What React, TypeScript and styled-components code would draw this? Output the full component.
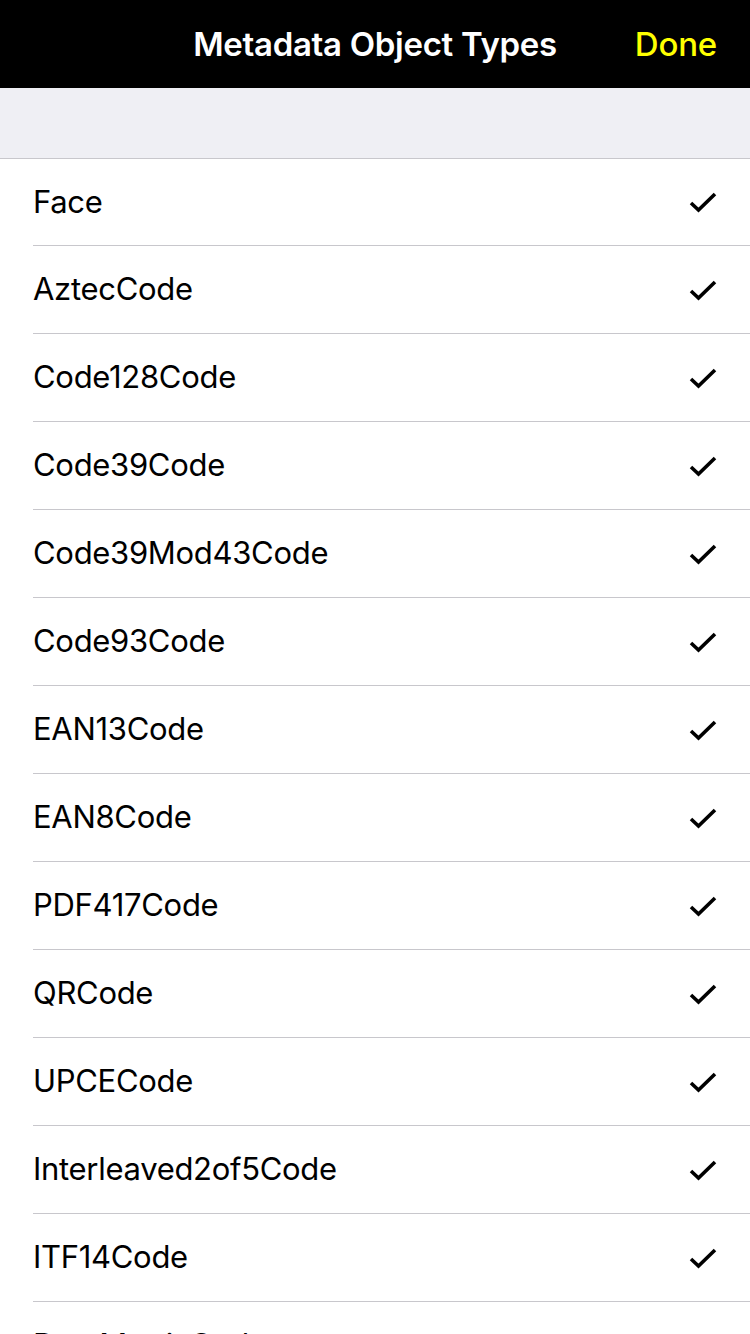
import React from "react";
import styled, { createGlobalStyle } from "styled-components";

const Global = createGlobalStyle`
  html, body { margin: 0; padding: 0; background: #ffffff; }
  body { font-family: Inter, "Noto Sans", sans-serif; -webkit-font-smoothing: antialiased; }
  #root { width: 750px; height: 1334px; overflow: hidden; }
`;

const Page = styled.div`
  width: 750px;
  height: 1334px;
  overflow: hidden;
  display: flex;
  flex-direction: column;
  background: #ffffff;
`;

const NavBar = styled.header`
  position: relative;
  height: 88px;
  flex: none;
  background: #000000;
  display: flex;
  align-items: center;
  justify-content: center;
`;

const Title = styled.h1`
  margin: 0;
  color: #ffffff;
  font-size: 33px;
  font-weight: 600;
  letter-spacing: -0.3px;
`;

const DoneButton = styled.button`
  position: absolute;
  right: 33px;
  top: 0;
  height: 88px;
  padding: 0;
  border: 0;
  background: transparent;
  color: #ffff00;
  font-family: inherit;
  font-size: 33px;
  font-weight: 500;
  letter-spacing: -0.2px;
`;

const SectionGap = styled.div`
  height: 70px;
  flex: none;
  background: #efeff4;
  border-bottom: 1px solid #c8c7cc;
`;

const List = styled.ul`
  margin: 0;
  padding: 0;
  list-style: none;
`;

const Row = styled.li`
  height: 88px;
  padding-left: 33px;
  display: flex;
  align-items: center;

  &:first-child {
    height: 87px;
  }
`;

const RowInner = styled.div`
  flex: 1;
  height: 100%;
  display: flex;
  align-items: center;
  justify-content: space-between;
  padding-right: 33px;
  border-bottom: 1px solid #c8c7cc;
  box-sizing: border-box;
`;

const Label = styled.span`
  color: #000000;
  font-size: 31px;
  font-weight: 400;
  letter-spacing: -0.3px;
  padding-bottom: 2px;
`;

const Check = () => (
  <svg width="28" height="22" viewBox="0 0 28 22" aria-hidden="true">
    <path d="M2 12 L9.5 19 L26 3" fill="none" stroke="#000" strokeWidth="3.6" strokeLinecap="butt" strokeLinejoin="miter" />
  </svg>
);

const items = [
  "Face",
  "AztecCode",
  "Code128Code",
  "Code39Code",
  "Code39Mod43Code",
  "Code93Code",
  "EAN13Code",
  "EAN8Code",
  "PDF417Code",
  "QRCode",
  "UPCECode",
  "Interleaved2of5Code",
  "ITF14Code",
  "DataMatrixCode",
];

export default function App() {
  return (
    <Page>
      <Global />
      <NavBar>
        <Title>Metadata Object Types</Title>
        <DoneButton>Done</DoneButton>
      </NavBar>
      <SectionGap />
      <List>
        {items.map((it) => (
          <Row key={it}>
            <RowInner>
              <Label>{it}</Label>
              <Check />
            </RowInner>
          </Row>
        ))}
      </List>
    </Page>
  );
}
